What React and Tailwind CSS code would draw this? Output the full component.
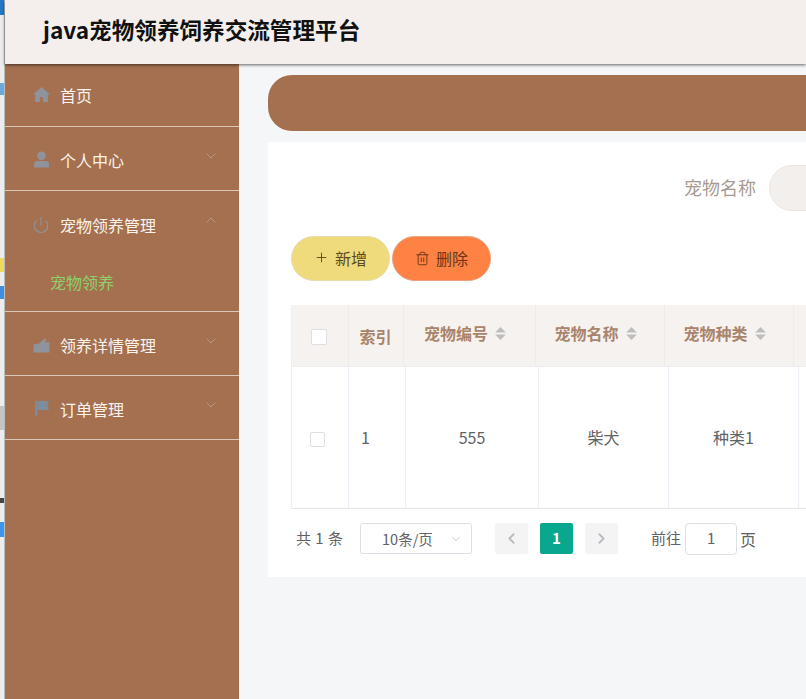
import React from "react";
import { Plus, Trash2, ChevronDown, ChevronUp, ChevronLeft, ChevronRight, Power } from "lucide-react";

const cjk = "font-['Noto_Sans_CJK_SC','Microsoft_YaHei',sans-serif]";

function HomeIcon() {
  return (
    <svg viewBox="0 0 16 16" className="w-[17px] h-[17px] text-[#8f939b]" fill="currentColor">
      <path d="M8 1 L0.5 7.5 L2 8.5 L2 15 L6.5 15 L6.5 10.5 L9.5 10.5 L9.5 15 L14 15 L14 8.5 L15.5 7.5 Z" />
    </svg>
  );
}

function UserIcon() {
  return (
    <svg viewBox="0 0 16 16" className="w-[17px] h-[17px] text-[#8f939b]" fill="currentColor">
      <circle cx="8" cy="4.5" r="4" />
      <path d="M1 15.5 L1 12.5 Q1 9.5 4.5 9.5 L11.5 9.5 Q15 9.5 15 12.5 L15 15.5 Z" />
    </svg>
  );
}

function BriefIcon() {
  return (
    <svg viewBox="0 0 16 16" className="w-[17px] h-[17px] text-[#8f939b]" fill="currentColor">
      <path d="M0.5 7 L6 6 L11 1.5 L12.5 2 L11.5 5 L15.5 5 L15.5 14.5 L0.5 14.5 Z" />
    </svg>
  );
}

function FlagIcon() {
  return (
    <svg viewBox="0 0 16 16" className="w-[17px] h-[17px] text-[#7f8c9c]" fill="currentColor">
      <path d="M2 0.5 L4 0.5 L4 15.5 L2 15.5 Z" />
      <path d="M4 1 L15 1 L13.5 5 L15 9.5 L4 9.5 Z" />
    </svg>
  );
}

function MenuItem({ icon, label, arrow, height = "h-16", offset = "pt-[2px]" }) {
  return (
    <div className={`${height} ${offset} relative flex items-center pl-[27px] pr-5 border-b border-[#d9c7ba]`}>
      <span className="w-[18px] flex justify-center">{icon}</span>
      <span className="ml-[10px] text-[16px] text-[#fbf3ec]">{label}</span>
      {arrow === "down" && (
        <ChevronDown className="absolute right-[20px] top-[21px] w-[16px] h-[16px] text-[#b89a86]" strokeWidth={1.5} />
      )}
    </div>
  );
}

function SortIcon() {
  return (
    <svg viewBox="0 0 10 14" className="w-[11px] h-[15px] ml-[7px] text-[#bdbdbd]" fill="currentColor">
      <path d="M5 1 L10 6 L0 6 Z" />
      <path d="M0 8 L10 8 L5 13 Z" />
    </svg>
  );
}

function HeadCell({ width, label, sort }) {
  return (
    <div className={`${width} ${sort ? "pb-[5px] pr-[9px]" : "pr-[1px]"} shrink-0 flex items-center justify-center border-r border-[#eeebe8] text-[#a9846c] font-bold text-[16px]`}>
      {label}
      {sort && <SortIcon />}
    </div>
  );
}

function BodyCell({ width, children }) {
  return (
    <div className={`${width} pb-[1px] shrink-0 flex items-center justify-center border-r border-[#ebeef5] text-[#606266] text-[16px]`}>
      {children}
    </div>
  );
}

export default function App() {
  return (
    <div className={`${cjk} flex w-full h-screen overflow-hidden bg-[#f5f6f8]`}>
      <div className="w-[5px] shrink-0 flex flex-col bg-[#ececec] border-r border-[#bcbcbc]">
        <div className="h-[15px] bg-[#1f78c8]" />
        <div className="h-[68px]" />
        <div className="h-[12px] bg-[#6aa9e0]" />
        <div className="h-[163px]" />
        <div className="h-[14px] bg-[#f0d860]" />
        <div className="h-[14px]" />
        <div className="h-[13px] bg-[#3f8fe0]" />
        <div className="h-[107px]" />
        <div className="h-[24px] bg-[#c4c4c4]" />
        <div className="h-[68px]" />
        <div className="h-[5px] bg-[#444444]" />
        <div className="h-[19px]" />
        <div className="h-[15px] bg-[#3a96e8]" />
      </div>

      <div className="flex-1 min-w-0 flex flex-col">
        <header className="h-[64px] shrink-0 flex items-center pl-[38px] pb-[4px] bg-[#f4efec] shadow-[0_1px_3px_rgba(0,0,0,0.6)] relative z-10">
          <h1 className="text-[22.6px] font-bold text-[#111111]">
            java宠物领养饲养交流管理平台
          </h1>
        </header>

        <div className="flex-1 flex min-h-0">
          <aside className="w-[234px] shrink-0 bg-[#a47050]">
            <MenuItem icon={<HomeIcon />} label="首页" height="h-[63px]" offset="pb-[1px]" />
            <MenuItem icon={<UserIcon />} label="个人中心" arrow="down" />
            <div className="border-b border-[#d9c7ba]">
              <div className="h-16 pt-[3px] relative flex items-center pl-[27px] pr-5">
                <span className="w-[18px] flex justify-center">
                  <Power className="w-[18px] h-[18px] text-[#8f939b]" strokeWidth={1.5} />
                </span>
                <span className="ml-[10px] text-[16px] text-[#fbf3ec]">宠物领养管理</span>
                <ChevronUp className="absolute right-[20px] top-[21px] w-[16px] h-[16px] text-[#b89a86]" strokeWidth={1.5} />
              </div>
              <div className="h-[56px] pl-[45px] pt-[2px] text-[16px] leading-[50px] text-[#8fd06a]">宠物领养</div>
            </div>
            <MenuItem icon={<BriefIcon />} label="领养详情管理" arrow="down" offset="pt-[3px]" />
            <MenuItem icon={<FlagIcon />} label="订单管理" arrow="down" />
          </aside>

          <main className="flex-1 min-w-0 pl-[29px] pt-[11px]">
            <div className="w-[800px] h-[56px] bg-[#a47050] rounded-l-[24px]" />
            <div className="w-[800px] h-[435px] mt-[11px] bg-white px-[23px] pt-[23px]">
              <div className="flex items-center h-[46px] pl-[393px]">
                <span className="text-[18px] text-[#a89a90] pb-[2px]">宠物名称</span>
                <div className="ml-[13px] w-[200px] h-[46px] rounded-full bg-[#f3efed] border border-[#ebe6e3]" />
              </div>

              <div className="flex mt-[25px] gap-[2px]">
                <button className="w-[99px] h-[45px] pb-[2px] rounded-full bg-[#f0db7c] border border-[#e6dcae] flex items-center justify-center text-[16px] text-[#5a4a20]">
                  <Plus className="w-[15px] h-[15px] mr-[6px]" strokeWidth={1.5} />
                  新增
                </button>
                <button className="w-[99px] h-[45px] pb-[1px] rounded-full bg-[#fe8244] border border-[#e8a27e] flex items-center justify-center text-[16px] text-[#6b3414]">
                  <Trash2 className="w-[15px] h-[15px] mr-[6px] mt-[1px]" strokeWidth={1.5} />
                  删除
                </button>
              </div>

              <div className="w-[700px] mt-[24px] border-l border-[#ebeef5]">
                <div className="h-[62px] flex bg-[#f6f2ef] border-b border-[#efedeb]">
                  <div className="w-[57px] pr-[2px] pt-[2px] shrink-0 flex items-center justify-center border-r border-[#eeebe8]">
                    <div className="w-4 h-4 bg-white border border-[#dcdfe6] rounded-[2px]" />
                  </div>
                  <HeadCell width="w-[55px]" label="索引" />
                  <HeadCell width="w-[132px]" label="宠物编号" sort />
                  <HeadCell width="w-[129px]" label="宠物名称" sort />
                  <HeadCell width="w-[129px]" label="宠物种类" sort />
                </div>
                <div className="h-[142px] flex border-b border-[#e6e6e6]">
                  <div className="w-[57px] pr-[5px] pt-[3px] shrink-0 flex items-center justify-center border-r border-[#ebeef5]">
                    <div className="w-[15px] h-[15px] bg-white border border-[#dcdfe6] rounded-[2px]" />
                  </div>
                  <div className="w-[57px] pb-[1px] shrink-0 flex items-center pl-[12px] border-r border-[#ebeef5] text-[#606266] text-[16px]">1</div>
                  <BodyCell width="w-[133px]">555</BodyCell>
                  <BodyCell width="w-[130px]">柴犬</BodyCell>
                  <BodyCell width="w-[130px]">种类1</BodyCell>
                </div>
              </div>

              <div className="flex items-center h-[33px] mt-[13px] text-[15px] text-[#606266]">
                <span className="ml-[5px] [word-spacing:1px]">共 1 条</span>
                <div className="ml-[17px] w-[112px] h-[31px] border border-[#dcdfe6] rounded-[3px] flex items-center pl-[21px] pr-[8px] justify-between">
                  <span className="text-[14.5px]">10条/页</span>
                  <ChevronDown className="w-[14px] h-[14px] text-[#c0c4cc]" strokeWidth={1.5} />
                </div>
                <div className="ml-[23px] w-[33px] h-[31px] bg-[#f4f4f5] rounded-[2px] flex items-center justify-center">
                  <ChevronLeft className="w-[17px] h-[17px] text-[#b8bbc2]" strokeWidth={2.5} />
                </div>
                <div className="ml-[12px] w-[33px] h-[31px] bg-[#09a88e] rounded-[2px] flex items-center justify-center text-white font-bold">
                  1
                </div>
                <div className="ml-[12px] w-[33px] h-[31px] bg-[#f4f4f5] rounded-[2px] flex items-center justify-center">
                  <ChevronRight className="w-[17px] h-[17px] text-[#b8bbc2]" strokeWidth={2.5} />
                </div>
                <span className="ml-[33px]">前往</span>
                <div className="ml-[4px] w-[52px] h-[32px] border border-[#dcdfe6] rounded-[4px] flex items-center justify-center">1</div>
                <span className="ml-[3px] text-[16px]">页</span>
              </div>
            </div>
          </main>
        </div>
      </div>
    </div>
  );
}
